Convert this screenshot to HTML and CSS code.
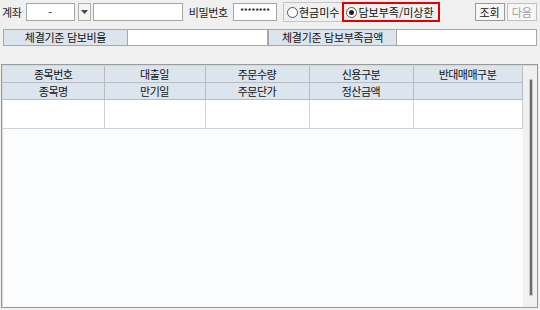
FILE: index.html
```html
<!DOCTYPE html>
<html lang="ko">
<head>
    <meta charset="UTF-8">
    <title>담보부족/미상환 조회</title>
    <link rel="stylesheet" href="styles.css">
</head>
<body>
    <div class="toolbar">
        <span class="label acct-label">계좌</span>
        <div class="field account">-</div>
        <div class="combo-btn">
            <svg width="7" height="4" viewBox="0 0 7 4"><path d="M0 0h7L3.5 4z" fill="#444"/></svg>
        </div>
        <div class="field account-name"></div>
        <span class="label pw-label">비밀번호</span>
        <div class="field password">********</div>
        <div class="radio-group">
            <label class="radio"><span class="dot"></span>현금미수</label>
            <label class="radio checked highlight"><span class="dot"></span>담보부족/미상환</label>
        </div>
        <div class="buttons">
            <button class="btn">조회</button>
            <button class="btn disabled">다음</button>
        </div>
    </div>

    <div class="summary">
        <div class="sum-label first">체결기준 담보비율</div>
        <div class="sum-value"></div>
        <div class="sum-label second">체결기준 담보부족금액</div>
        <div class="sum-value"></div>
    </div>

    <div class="grid">
        <div class="grid-body">
            <table>
                <colgroup>
                    <col style="width:101px">
                    <col style="width:101px">
                    <col style="width:104px">
                    <col style="width:104px">
                    <col style="width:109px">
                </colgroup>
                <thead>
                    <tr>
                        <th>종목번호</th>
                        <th>대출일</th>
                        <th>주문수량</th>
                        <th>신용구분</th>
                        <th>반대매매구분</th>
                    </tr>
                    <tr>
                        <th>종목명</th>
                        <th>만기일</th>
                        <th>주문단가</th>
                        <th>정산금액</th>
                        <th></th>
                    </tr>
                </thead>
                <tbody>
                    <tr>
                        <td></td>
                        <td></td>
                        <td></td>
                        <td></td>
                        <td></td>
                    </tr>
                </tbody>
            </table>
        </div>
        <div class="scrollbar">
            <div class="thumb"></div>
        </div>
    </div>
</body>
</html>
```

FILE: styles.css
```css
body {
    margin: 0;
    width: 540px;
    height: 310px;
    background-color: #f0f0f0;
    font-family: "Noto Sans CJK KR", "Liberation Sans", sans-serif;
    font-size: 11px;
    color: #111;
    overflow: hidden;
}

.toolbar {
    display: flex;
    align-items: center;
    height: 24px;
    padding: 0 3px 0 2px;
}

.label {
    letter-spacing: -0.3px;
    color: #222;
}

.field {
    height: 16px;
    line-height: 16px;
    background-color: #fff;
    border: 1px solid #a5a5a5;
    box-sizing: content-box;
}

.account {
    width: 47px;
    margin-left: 4px;
    text-align: center;
}

.combo-btn {
    width: 11px;
    height: 16px;
    margin-left: 3px;
    border: 1px solid #b0b0b0;
    background-color: #f4f4f4;
    display: flex;
    align-items: center;
    justify-content: center;
}

.account-name {
    width: 88px;
    margin-left: 2px;
}

.pw-label {
    margin-left: 6px;
}

.password {
    width: 42px;
    margin-left: 5px;
    font-size: 9px;
    text-align: center;
    letter-spacing: -0.5px;
}

.radio-group {
    display: flex;
    align-items: center;
    height: 18px;
    margin-left: 6px;
    padding-left: 3px;
    border: 1px solid #c4c4c4;
    border-right: none;
}

.radio {
    display: flex;
    align-items: center;
    height: 16px;
    padding-right: 2px;
}

.dot {
    width: 9px;
    height: 9px;
    border: 1px solid #555;
    border-radius: 50%;
    background-color: #fff;
    margin-right: 1px;
    position: relative;
}

.checked .dot::after {
    content: "";
    position: absolute;
    left: 2px;
    top: 2px;
    width: 5px;
    height: 5px;
    border-radius: 50%;
    background-color: #222;
}

.highlight {
    margin-left: 1px;
    padding: 0 4px 0 2px;
    border: 2px solid #e00000;
}

.buttons {
    display: flex;
    gap: 2px;
    margin-left: auto;
}

.btn {
    height: 18px;
    padding: 0 4px;
    font-family: inherit;
    font-size: 11px;
    color: #111;
    background-color: #f7f7f7;
    border: 1px solid #9a9a9a;
    line-height: 15px;
}

.btn.disabled {
    color: #a0a0a0;
    border-color: #c0c0c0;
}

.summary {
    display: flex;
    margin: 5px 3px 0 3px;
    height: 17px;
}

.sum-label {
    background-color: #dce4ee;
    border: 1px solid #a8a8a8;
    text-align: center;
    line-height: 15px;
    letter-spacing: -0.3px;
    box-sizing: border-box;
}

.sum-label.first {
    width: 125px;
}

.sum-label.second {
    width: 129px;
}

.sum-value {
    width: 140px;
    background-color: #fff;
    border: 1px solid #a8a8a8;
    border-left: none;
    box-sizing: border-box;
}

.grid {
    display: flex;
    margin: 18px 2px 1px 1px;
    height: 241px;
    border: 1px solid #9a9a9a;
    box-shadow: inset 1px 1px 0 #d8d8d8;
    padding: 1px 0 0 1px;
    background-color: #fafcfe;
}

.grid-body {
    flex: 1;
}

table {
    border-collapse: collapse;
    table-layout: fixed;
    width: 519px;
}

th {
    height: 16px;
    padding: 0;
    font-weight: normal;
    background-color: #dce4ee;
    border: 1px solid #b8bcc2;
    letter-spacing: -0.5px;
    line-height: 14px;
    border-top: none;
}

td {
    height: 28px;
    padding: 0;
    background-color: #fff;
    border: 1px solid #d0d0d0;
}

th:first-child,
td:first-child {
    border-left: none;
}

.scrollbar {
    width: 14px;
    background-color: #f0f0f0;
    position: relative;
}

.thumb {
    position: absolute;
    left: 6px;
    top: 13px;
    width: 2px;
    height: 215px;
    background-color: #6a6a6a;
    border: 1px solid #c8c8c8;
}
```
